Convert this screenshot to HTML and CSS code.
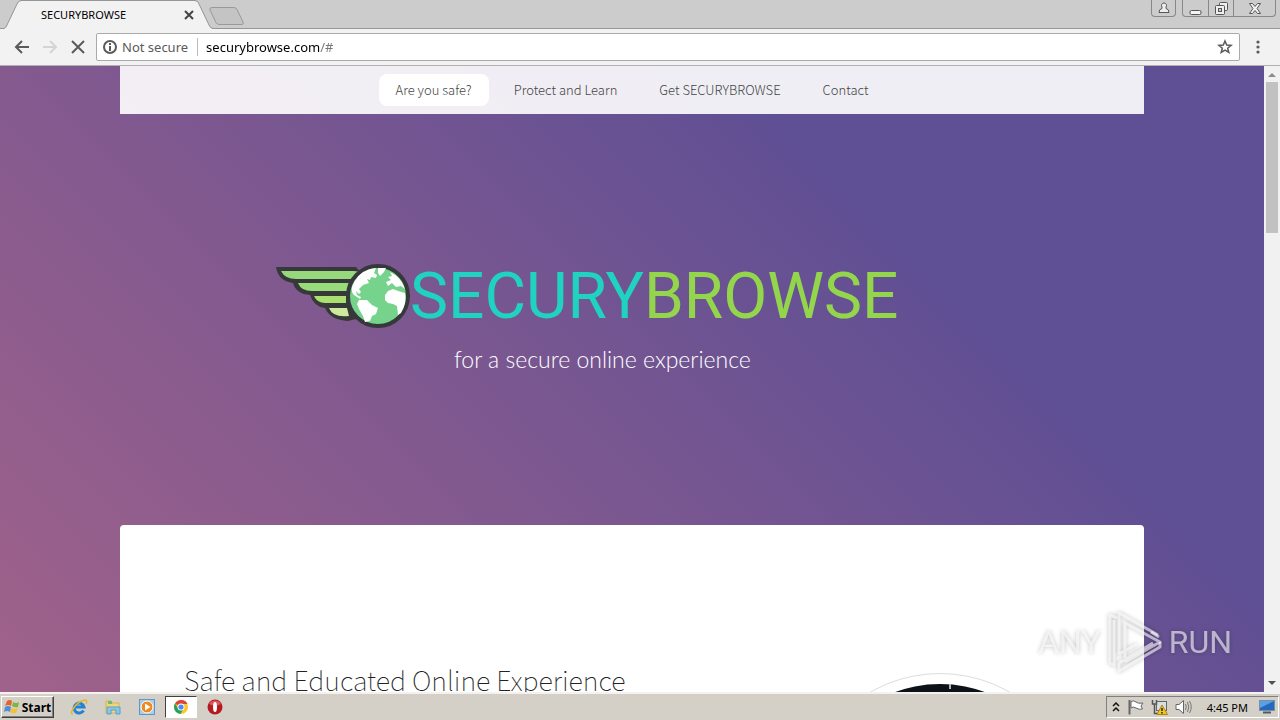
FILE: index.html
```html
<!DOCTYPE html>
<html lang="en">
<head>
  <meta charset="UTF-8">
  <title>SECURYBROWSE</title>
  <link rel="stylesheet" href="styles.css">
</head>
<body>

<!-- Tabs and window buttons -->
<header class="tab-strip">
  <div class="tab">
    <svg class="tab-shape" width="216" height="29" viewBox="0 0 216 29">
      <path d="M0 28.5H4Q6 28 7 25L17 4Q18.500 1 21 1H195Q198 1 199 4L209 25Q210.500 28.500 213 28.500H216V29H0Z" fill="#f2f2f2"/>
      <path d="M0 28.500H4Q6 28 7 25L17 4Q18.500 .5 21 .5H195Q198 .5 199 4L209 25Q210.500 28.500 213 28.500H216" fill="none" stroke="#969696"/>
    </svg>
    <span class="tab-title">SECURYBROWSE</span>
    <button class="tab-close" aria-label="Close tab">
      <svg width="10" height="10" viewBox="0 0 10 10"><path d="M1 1L9 9M9 1L1 9" stroke="#444" stroke-width="2"/></svg>
    </button>
  </div>
  <button class="new-tab" aria-label="New tab">
    <svg width="36" height="18" viewBox="0 0 36 18"><path d="M3 .5H25Q27 .5 28 2.500L34 15Q35 17.500 33 17.500H10Q8 17.500 7 15.500L1 3Q0 .5 3 .5Z" fill="#c4c4c4" stroke="#999"/></svg>
  </button>
  <div class="window-buttons">
    <button class="win user" aria-label="User">
      <svg width="12" height="12" viewBox="0 0 12 12"><path d="M6 1a2.500 2.500 0 0 1 2 4L8 6.500Q11 7 11 10.500H1Q1 7 4 6.500L4 5A2.500 2.500 0 0 1 6 1Z" fill="#eee" stroke="#555"/></svg>
    </button>
    <div class="win-group">
      <button class="win" aria-label="Minimize">
        <svg width="13" height="13" viewBox="0 0 13 13"><rect x="1" y="8.500" width="11" height="4" rx="1.500" fill="#f4f4f4" stroke="#555"/></svg>
      </button>
      <button class="win" aria-label="Restore">
        <svg width="13" height="13" viewBox="0 0 13 13"><rect x="4.500" y=".5" width="8" height="8" rx="1" fill="#eee" stroke="#555"/><rect x=".5" y="3.500" width="9" height="9" rx="1" fill="#eee" stroke="#555"/><rect x="3.500" y="6.500" width="3" height="3" fill="#ccc" stroke="#555"/></svg>
      </button>
      <button class="win close" aria-label="Close">
        <svg width="12" height="11" viewBox="0 0 12 11"><path d="M.5.5H3.500L6 3.500L8.500.5H11.500L8 5.500L11.500 10.500H8.500L6 7.500L3.500 10.500H.5L4 5.500Z" fill="#f4f4f4" stroke="#555"/></svg>
      </button>
    </div>
  </div>
</header>

<!-- Address bar -->
<div class="toolbar">
  <button class="tool" aria-label="Back">
    <svg width="16" height="16" viewBox="0 0 16 16"><path d="M15 8H2M8 2L2 8L8 14" fill="none" stroke="#5a5a5a" stroke-width="2"/></svg>
  </button>
  <button class="tool" aria-label="Forward" disabled>
    <svg width="16" height="16" viewBox="0 0 16 16"><path d="M1 8H14M8 2L14 8L8 14" fill="none" stroke="#d4d4d4" stroke-width="2"/></svg>
  </button>
  <button class="tool" aria-label="Stop">
    <svg width="16" height="16" viewBox="0 0 16 16"><path d="M2 2L14 14M14 2L2 14" stroke="#5a5a5a" stroke-width="2"/></svg>
  </button>
  <div class="omnibox">
    <svg width="14" height="14" viewBox="0 0 14 14"><circle cx="7" cy="7" r="6" fill="none" stroke="#5a5a5a" stroke-width="2"/><path d="M7 3V5M7 6V11" stroke="#5a5a5a" stroke-width="2"/></svg>
    <label for="url">Not secure</label>
    <input id="url" type="text" value="securybrowse.com/#">
    <button class="star" aria-label="Bookmark">
      <svg width="16" height="16" viewBox="0 0 16 16"><path d="M8 2L9.700 6.100L14.100 6.400L10.700 9.200L11.800 13.500L8 11.200L4.200 13.500L5.300 9.200L1.900 6.400L6.300 6.100Z" fill="none" stroke="#5a5a5a" stroke-width="1.500"/></svg>
    </button>
  </div>
  <button class="menu" aria-label="Menu">
    <svg width="4" height="14" viewBox="0 0 4 14"><g fill="#5a5a5a"><circle cx="2" cy="2" r="1.600"/><circle cx="2" cy="7" r="1.600"/><circle cx="2" cy="12" r="1.600"/></g></svg>
  </button>
</div>

<div class="viewport">
  <div class="page">
    <div class="wrapper">
      <nav class="nav">
        <a href="#" class="active">Are you safe?</a>
        <a href="#">Protect and Learn</a>
        <a href="#">Get SECURYBROWSE</a>
        <a href="#">Contact</a>
      </nav>

      <div class="hero">
        <h1 class="logo">
          <svg width="134" height="68" viewBox="0 0 134 68">
            <!-- wing -->
            <path d="M0 4H80L88 14V54L72 58Q54 57 49 45Q38 44 34 32Q20 31 17 20Q2 18 0 4Z" fill="#37383a"/>
            <path d="M5 8H78Q82 8 84 10L76 16H20Q9 16 5 8Z" fill="#97d87c"/>
            <path d="M22 20H74L71 28H36Q25 28 22 20Z" fill="#97dc78"/>
            <path d="M38 33H70V40H49Q41 40 38 33Z" fill="#a9e070"/>
            <path d="M53 45H71L73 53Q57 55 53 45Z" fill="#cdea9c"/>
            <!-- globe -->
            <circle cx="102" cy="33" r="30" fill="#75d38b" stroke="#37383a" stroke-width="4"/>
            <path d="M76 24Q81 10 94 6L100 5L98 10L101 12L100 15L95 14L94 17L91 16L93 20L87 22L83 26L85 29L83 31L80 28L81 32L85 34L84 36L78 32Q75 29 76 24Z" fill="#fff"/>
            <path d="M83 37L91 37L96 42L102 45L100 51L96 53L94 58L89 59L87 53L83 46L81 41Z" fill="#fff"/>
            <path d="M102 5H110L108 9L104 13L102 10Z" fill="#fff"/>
            <path d="M114 9Q125 14 129 26L125 23L120 24L116 20L112 23L110 19L115 17L112 14L116 13Z" fill="#fff"/>
            <path d="M109 32L112 28L117 26L122 28L129 30Q131 40 125 50L122 52L121 43L117 41L112 40L109 37Z" fill="#fff"/>
          </svg>
          <span class="secury">SECURY</span><span class="browse">BROWSE</span>
        </h1>
        <p class="tagline">for a secure online experience</p>
      </div>

      <main class="main">
        <h2>Safe and Educated Online Experience</h2>
        <div class="picture"><div class="picture-inner"><span class="speck"></span></div></div>
      </main>
    </div>
  </div>

  <div class="scrollbar">
    <svg width="8" height="16" viewBox="0 0 8 16"><path d="M0 11L4 7L8 11Z" fill="#8c8c8c"/></svg>
    <div class="thumb"></div>
    <svg class="down" width="8" height="16" viewBox="0 0 8 16"><path d="M0 5H8L4 9Z" fill="#505050"/></svg>
  </div>

  <div class="watermark">
    <span>ANY</span>
    <svg width="60" height="64" viewBox="0 0 60 64" fill="none" stroke="#fff" stroke-opacity=".6" stroke-width="3" stroke-linejoin="round">
      <path d="M14 44V3L53 25M14 44L32 34M20 48V13L55 32L20 52"/>
      <path d="M12 8L5 5V53L9 55V10M14 53V61L55 37L55 32M14 53L48 33M46 22L54 27"/>
    </svg>
    <span>RUN</span>
  </div>
</div>

<footer class="taskbar">
  <button class="start">
    <svg width="17" height="16" viewBox="0 0 17 16"><path d="M3 2Q6 0 8 2L7 7Q4 5 1 7Z" fill="#e8622c"/><path d="M9 3Q12 5 15 3L14 8Q11 9 8 7Z" fill="#7cb83c"/><path d="M1 8Q4 6 7 8L6 13Q3 11 0 13Z" fill="#4b8fd8"/><path d="M8 9Q11 11 14 9L12 14Q9 15 6 13Z" fill="#f5c02f"/></svg>
    Start
  </button>
  <button class="app" aria-label="Internet Explorer">
    <svg width="18" height="18" viewBox="0 0 18 18"><path d="M13.500 12.500A5 5 0 1 1 14 9H5" fill="none" stroke="#2383d6" stroke-width="3"/><path d="M3 16Q0 16 3 11Q8 3 15 2Q18 2 16 6" fill="none" stroke="#e5b52a" stroke-width="1.500"/></svg>
  </button>
  <button class="app" aria-label="Explorer">
    <svg width="18" height="18" viewBox="0 0 18 18"><path d="M2 3H7L8 5H15V15H2Z" fill="#f1d676" stroke="#d5b552"/><path d="M4 3H8V6H4Z" fill="#72ba72"/><path d="M3 9H16V16H12V12H7V16H3Z" fill="#8bc6e8" stroke="#5b9fc8"/></svg>
  </button>
  <button class="app" aria-label="Media Player">
    <svg width="18" height="18" viewBox="0 0 18 18"><rect x="1.500" y="1.500" width="15" height="15" fill="#a8cdec" stroke="#5b97cc"/><circle cx="9" cy="9" r="6" fill="#f08a1d" stroke="#fff"/><path d="M7 5.500L12.500 9L7 12.500Z" fill="#fff"/></svg>
  </button>
  <button class="app pressed" aria-label="Chrome">
    <svg width="16" height="16" viewBox="0 0 16 16"><circle cx="8" cy="8" r="7" fill="#f9c72d"/><path d="M8 8L2 4.500A7 7 0 0 1 14.500 5H8Z" fill="#dd4437"/><path d="M2 4.500A7 7 0 0 0 7.500 15L10.500 9.500L8 8L5 9Z" fill="#24a15d"/><circle cx="8" cy="8" r="3.500" fill="#fff"/><circle cx="8" cy="8" r="2.600" fill="#4a8af4"/></svg>
  </button>
  <button class="app" aria-label="Opera">
    <svg width="18" height="18" viewBox="0 0 18 18"><circle cx="9" cy="9" r="7.500" fill="#b51a20"/><path d="M3 6A7 7 0 0 1 15 6Q9 9 3 6Z" fill="#e0555a"/><ellipse cx="9" cy="9" rx="2" ry="5" fill="#fff"/></svg>
  </button>
  <div class="tray">
    <svg width="8" height="12" viewBox="0 0 8 12"><path d="M1 5L4 2L7 5M1 10L4 7L7 10" fill="none" stroke="#111" stroke-width="1.500"/></svg>
    <svg width="17" height="16" viewBox="0 0 17 16"><path d="M2.500 1V15.500" stroke="#666" stroke-width="2"/><path d="M4 2.500Q7 1 9 3T16 4L14 7L15.500 10Q12 11 9 9T4 9Z" fill="#fff" stroke="#666"/></svg>
    <svg width="17" height="16" viewBox="0 0 17 16"><rect x="5.500" y="2.500" width="10" height="9" fill="#d6dfe5" stroke="#666"/><path d="M1.500 1V5H5.500V1M3.500 5V14.500H8" fill="none" stroke="#555" stroke-width="1.500"/><path d="M11 6L16.500 15.500H6Z" fill="#f8c81c" stroke="#a98610"/><path d="M11 9V12M11 13V14.500" stroke="#222" stroke-width="1.500"/></svg>
    <svg width="17" height="16" viewBox="0 0 17 16"><path d="M1 5.500H4L8.500 1.500V14.500L4 10.500H1Z" fill="#fff" stroke="#666"/><path d="M10.500 5Q12 8 10.500 11M12.500 3Q15 8 12.500 13M14.500 2Q18 8 14.500 14" fill="none" stroke="#777"/></svg>
    <time>4:45 PM</time>
    <svg class="desktop" width="16" height="14" viewBox="0 0 16 14"><rect x=".5" y=".5" width="15" height="10" fill="#2569bd" stroke="#7890a5"/><path d="M1 1H15L1 8Z" fill="#5ba0e2"/><path d="M4 12.500H12" stroke="#4c5b68" stroke-width="2"/></svg>
  </div>
</footer>

</body>
</html>
```
FILE: styles.css
```css
* {
  box-sizing: border-box;
}

body {
  margin: 0;
  height: 100vh;
  display: flex;
  flex-direction: column;
  overflow: hidden;
  font-family: "Noto Sans", sans-serif;
  background: #f2f2f2;
}

button {
  font: inherit;
  border: 0;
  padding: 0;
  background: none;
  display: flex;
  align-items: center;
  justify-content: center;
}

svg {
  flex: none;
  display: block;
}

/* tab strip */
.tab-strip {
  height: 29px;
  flex: none;
  display: flex;
  background: #ccc;
  box-shadow: inset 0 -1px #969696;
}

.tab {
  width: 209px;
  position: relative;
  display: flex;
  align-items: center;
  justify-content: space-between;
  padding: 0 15px 0 41px;
  font-size: 11px;
}

.tab-shape {
  position: absolute;
  left: 0;
  top: 0;
}

.tab-title, .tab-close {
  position: relative;
}

.new-tab {
  height: 31px;
}

.window-buttons {
  margin-left: auto;
  padding-right: 4px;
  display: flex;
  align-items: flex-start;
  gap: 6px;
}

.win-group {
  display: flex;
  border: 1px solid #888;
  border-top: 0;
  border-radius: 0 0 4px 4px;
}

.win {
  width: 25px;
  height: 16px;
}

.win + .win {
  border-left: 1px solid #888;
}

.win.user {
  height: 17px;
  border: 1px solid #888;
  border-top: 0;
  border-radius: 0 0 4px 4px;
}

.win.close {
  width: 42px;
}

/* toolbar */
.toolbar {
  height: 37px;
  flex: none;
  display: flex;
  align-items: center;
  padding: 0 20px 0 14px;
  gap: 12px;
  border-bottom: 1px solid #b0b0b0;
}

.omnibox {
  flex: 1;
  height: 28px;
  margin-left: -2px;
  display: flex;
  align-items: center;
  padding: 0 6px;
  border: 1px solid #aaa;
  border-radius: 2px;
  background: #fff;
  font-size: 13px;
}

.omnibox label {
  color: #5a5a5a;
  margin-left: 5px;
  padding-right: 9px;
  border-right: 1px solid #bbb;
  line-height: 18px;
}

/* domain in black, the path in grey */
.omnibox input {
  flex: 1;
  border: 0;
  padding: 0 8px;
  outline: none;
  font: inherit;
  color: transparent;
  background: linear-gradient(90deg, #000 122px, #777 122px);
  -webkit-background-clip: text;
  background-clip: text;
}

.menu {
  margin-left: 4px;
}

/* page */
.viewport {
  flex: 1;
  min-height: 0;
  display: flex;
  position: relative;
}

.page {
  flex: 1;
  overflow: hidden;
  background: linear-gradient(45deg, #a0628a 0%, #845a8f 33%, #5f4f94 72%);
}

.wrapper {
  width: 90%;
  max-width: 1024px;
  margin: 0 auto;
}

.nav {
  display: flex;
  justify-content: center;
  gap: 8px;
  padding: 8px;
  background: rgba(255, 255, 255, 0.9);
  font-family: "Noto Sans CJK SC", sans-serif;
  font-weight: 300;
  font-size: 13px;
}

.nav a {
  padding: 0 17px;
  line-height: 32px;
  color: #444;
  text-decoration: none;
  border-radius: 8px;
}

.nav a.active {
  background: #fff;
}

.hero {
  height: 411px;
  padding: 147px 0 0 156px;
}

.logo {
  margin: 0;
  display: flex;
  align-items: center;
  font-family: Roboto, sans-serif;
  font-weight: 400;
  font-size: 64px;
  line-height: 72px;
}

.secury {
  color: #1fd3c0;
}

.browse {
  color: #93d64c;
}

.tagline {
  margin: 10px 0 0 178px;
  color: #fff;
  font-family: Lato, sans-serif;
  font-weight: 300;
  font-size: 23px;
  line-height: 32px;
}

.main {
  display: flex;
  justify-content: space-between;
  padding: 148px 64px;
  background: #fff;
  border-radius: 4px;
}

.main h2 {
  margin: 0;
  margin-top: -12px;
  font-family: "Noto Sans CJK SC", sans-serif;
  font-weight: 100;
  font-size: 27px;
  line-height: 38px;
  color: #222;
}

.picture {
  width: 280px;
  height: 280px;
  flex: none;
  padding: 10px;
  border: 1px solid #ddd;
  border-radius: 50%;
}

.picture-inner {
  height: 100%;
  border-radius: 50%;
  background: #0c1218;
  display: flex;
  justify-content: center;
}

.speck {
  width: 2px;
  height: 5px;
  margin-left: 20px;
  background: #a9b4bb;
}

.scrollbar {
  width: 16px;
  display: flex;
  flex-direction: column;
  align-items: center;
  background: #f1f1f1;
}

.thumb {
  width: 12px;
  height: 151px;
  background: #c1c1c1;
}

.scrollbar .down {
  margin-top: auto;
}

.watermark {
  position: absolute;
  right: 48px;
  bottom: 18px;
  display: flex;
  align-items: center;
  gap: 4px;
  font-family: Roboto, sans-serif;
  font-size: 32px;
  color: rgba(255, 255, 255, 0.6);
  filter: drop-shadow(0 0 2px rgba(0, 0, 0, 0.4));
}

/* taskbar */
.taskbar {
  height: 28px;
  flex: none;
  display: flex;
  align-items: center;
  padding: 2px 1px 0;
  gap: 2px;
  background: #d4d0c8;
  box-shadow: inset 0 2px #f4f2ee;
}

.start {
  width: 53px;
  height: 22px;
  margin-right: 7px;
  gap: 1px;
  font-size: 12px;
  font-weight: bold;
  border: 1px solid;
  border-color: #fff #404040 #404040 #fff;
  box-shadow: inset -1px -1px #808080;
}

.app {
  width: 32px;
  height: 22px;
}

.app.pressed {
  background: #fff;
  border: 1px solid;
  border-color: #404040 #fff #fff #404040;
}

.tray {
  height: 22px;
  margin-left: auto;
  display: flex;
  align-items: center;
  gap: 7px;
  padding: 0 3px 0 5px;
  border: 1px solid;
  border-color: #808080 #fff #fff #808080;
  font-size: 11px;
}

.tray time {
  margin-left: 8px;
}

.desktop {
  margin-left: 4px;
}
```
